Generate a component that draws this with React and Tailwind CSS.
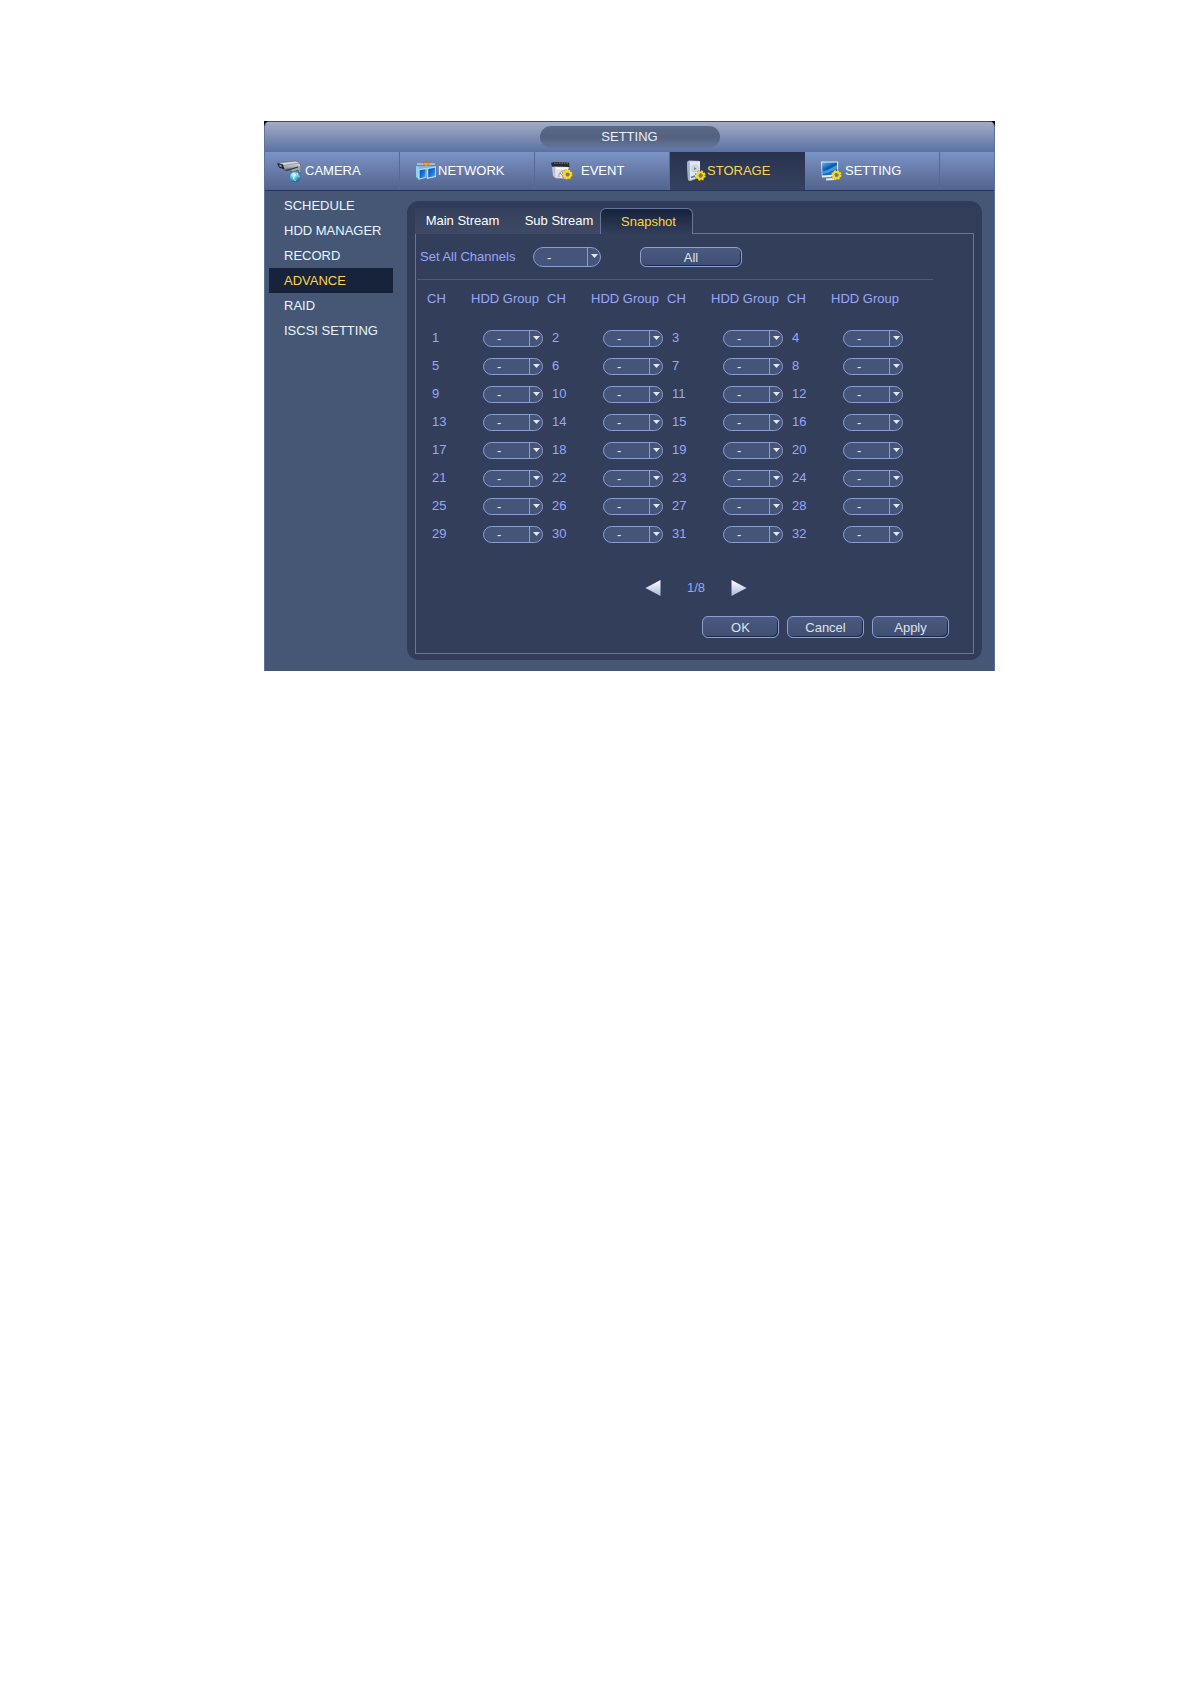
import { useState } from 'react';

const GROUPS = ['-', '1', '2', '3', '4'];
const ROWS = [0, 1, 2, 3, 4, 5, 6, 7].map(r => [1, 2, 3, 4].map(c => r * 4 + c));
const SIDE_ITEMS = ['SCHEDULE', 'HDD MANAGER', 'RECORD', 'ADVANCE', 'RAID', 'ISCSI SETTING'];

function Gear({ x, y }) {
  return (
    <g transform={`translate(${x} ${y})`}>
      <circle r="4.4" fill="none" stroke="#a87a12" strokeWidth="2.2" strokeDasharray="1.900 1.550" />
      <circle r="3.900" fill="none" stroke="#f8dc20" strokeWidth="2" strokeDasharray="1.900 1.160" />
      <circle r="3" fill="none" stroke="#f8d91e" strokeWidth="1.800" />
      <circle r="1.900" fill="#6d7a92" />
    </g>
  );
}

function CameraIcon() {
  return (
    <svg className="h-6 w-6 shrink-0" viewBox="0 0 24 24" aria-hidden="true">
      <defs>
        <linearGradient id="camBody" x1="0" y1="0" x2="0" y2="1">
          <stop offset="0" stopColor="#f2f2f4" />
          <stop offset="0.55" stopColor="#a9adb5" />
          <stop offset="1" stopColor="#4a4f5a" />
        </linearGradient>
        <radialGradient id="camGlobe" cx="0.4" cy="0.3" r="0.7">
          <stop offset="0" stopColor="#d8fbff" />
          <stop offset="0.5" stopColor="#55bfe0" />
          <stop offset="1" stopColor="#14689a" />
        </radialGradient>
      </defs>
      <path d="M20 7l4-2v9h-2l-1-3-5 2-3-1 1-2 4-1z" fill="#9ba3b3" stroke="#3c465c" strokeWidth="0.6" />
      <path d="M5 5l15-2 3 2v3l-14 4-4-2z" fill="url(#camBody)" />
      <path d="M1 4l18-2 4 2-16 2.500z" fill="#d3d5db" stroke="#5b5f6a" strokeWidth="0.5" />
      <path d="M0 4l6 1.500 1.500 5-5.500-2z" fill="#22252c" />
      <path d="M2.500 5.500l2 .7v2l-2-.8z" fill="#8f98a8" />
      <path d="M9 11.500l12-3.500" stroke="#2d323d" strokeWidth="1.200" />
      <circle cx="18" cy="18" r="5.200" fill="url(#camGlobe)" />
      <path d="M14.500 16c2-2 4-1 4 0s-2 1-2 3 2 2 2 3M20.500 14c-1 2 1 3 2 4" fill="none" stroke="#e2fbff" strokeWidth="0.9" />
    </svg>
  );
}

function NetworkIcon() {
  return (
    <svg className="h-5 w-5 shrink-0" viewBox="0 0 20 20" aria-hidden="true">
      <defs>
        <linearGradient id="netScreen" x1="0" y1="0" x2="1" y2="1">
          <stop offset="0" stopColor="#0c4fb4" />
          <stop offset="0.5" stopColor="#1671d2" />
          <stop offset="1" stopColor="#4fb0f2" />
        </linearGradient>
      </defs>
      <path d="M1 3h18" stroke="#d9c9a8" strokeWidth="1.300" />
      <path d="M7 1.500h6l-2 3.500H9z" fill="#f5a81c" stroke="#c2560e" strokeWidth="0.5" />
      <path d="M0 5h20v3H0z" fill="#7fb6e8" />
      <path d="M0 5l3 1.500v12L0 16z" fill="#8fd0f4" />
      <path d="M2.500 8.200l8-1.400v10l-8 2z" fill="#b5dcf7" />
      <path d="M3.600 9.200l6-1v7.800l-6 1.500z" fill="url(#netScreen)" />
      <path d="M11 7l9-1.500v10.500l-9 2z" fill="#b5dcf7" />
      <path d="M12.200 8l6.800-1.200v8.200l-6.800 1.500z" fill="url(#netScreen)" />
    </svg>
  );
}

function EventIcon() {
  return (
    <svg className="h-5 w-[22px] shrink-0" viewBox="0 0 22 20" aria-hidden="true">
      <path d="M3 5h15l-1 13-13-1z" fill="#dfe3e8" stroke="#8a8f99" strokeWidth="0.5" />
      <path d="M0 2l3-1 15 .5.500 4.500L1 5.500z" fill="#2b2b2d" />
      <path d="M3 2.200h14" stroke="#898b90" strokeWidth="0.8" strokeDasharray="1.500 1" />
      <path d="M1 6h2l1.500 11-2.500-2z" fill="#c4c9d1" />
      <path d="M5 7.500h12" stroke="#fff" strokeWidth="1.400" />
      <path d="M8 16a5 5 0 0 1 6-6M9 12l3 3" fill="none" stroke="#9098a8" strokeWidth="1" />
      <Gear x={16.5} y={13.5} />
    </svg>
  );
}

function StorageIcon() {
  return (
    <svg className="h-[22px] w-5 shrink-0" viewBox="0 0 20 22" aria-hidden="true">
      <path d="M1 2l2-1.500L14 1v14l-1 3-9 3-2-1z" fill="#b9c6d9" />
      <path d="M3.500 1.500L14 1.500v14L4 20z" fill="#dfe7f1" />
      <path d="M1 2l2.500-.5L4 20.500 2 20z" fill="#9fb0c8" />
      <circle cx="9" cy="8.500" r="3.500" fill="#cdd8e7" stroke="#b3c0d3" strokeWidth="0.6" />
      <path d="M8 7l2.500 1.500L8 10.500z" fill="#7587a0" />
      <path d="M5 17.500l4-1.500" stroke="#5f7189" strokeWidth="1.400" />
      <Gear x={14.5} y={15.5} />
    </svg>
  );
}

function SettingIcon() {
  return (
    <svg className="h-5 w-[22px] shrink-0" viewBox="0 0 22 20" aria-hidden="true">
      <defs>
        <linearGradient id="setScreen" x1="0" y1="0" x2="0.6" y2="1">
          <stop offset="0" stopColor="#5fb6f2" />
          <stop offset="0.5" stopColor="#0f55ad" />
          <stop offset="1" stopColor="#1a78d6" />
        </linearGradient>
      </defs>
      <path d="M1 .5h17v15l-16 1z" fill="#eef5fb" stroke="#9fb6d0" strokeWidth="0.4" />
      <path d="M2 1.500h15v12l-14.500 1z" fill="url(#setScreen)" />
      <path d="M2 10c5 0 9-3 15-6v4c-5 1-9 5-14.500 5z" fill="#63baf4" opacity="0.6" />
      <path d="M6 17.500l8-.8 1 2.300-9 .5z" fill="#e4eaf2" />
      <Gear x={16.5} y={14} />
    </svg>
  );
}

const NAV = [
  { label: 'CAMERA', Icon: CameraIcon, pad: 'pl-3 gap-1' },
  { label: 'NETWORK', Icon: NetworkIcon, pad: 'pl-4 gap-[2px]' },
  { label: 'EVENT', Icon: EventIcon, pad: 'pl-4 gap-2' },
  { label: 'STORAGE', Icon: StorageIcon, pad: 'pl-4 gap-[1px]' },
  { label: 'SETTING', Icon: SettingIcon, pad: 'pl-[15px] gap-[3px]' },
];

function GroupSelect({ label, id, big, value, onChange }) {
  return (
    <span className={`relative flex ${big ? 'h-5 w-[68px]' : 'h-[17px] w-[60px]'}`}>
      <select id={id} aria-label={label} value={value} onChange={e => onChange(e.target.value)}
        className="h-full w-full appearance-none rounded-full border border-[#8b9cd0] bg-[#45557a] pl-[13px] text-[13px] leading-none text-[#e4eaf8] outline-none">
        {GROUPS.map(g => <option key={g}>{g}</option>)}
      </select>
      <span className="pointer-events-none absolute inset-y-0 right-0 flex w-[14px] justify-center border-l border-[#8b9cd0] pr-[1px]">
        <svg className={big ? 'mt-[7px] h-1 w-[7px]' : 'mt-[6px] h-1 w-[7px]'} viewBox="0 0 7 4" aria-hidden="true">
          <path d="M0 0h7L3.500 4z" fill="#dfe7f8" />
        </svg>
      </span>
    </span>
  );
}

function Button({ children, className, onClick }) {
  return (
    <button type="button" onClick={onClick}
      className={`flex items-center justify-center rounded-md border border-[#8f9fd6] bg-gradient-to-b from-[#4a5a80] to-[#3f4e70] text-[13px] leading-none text-[#dde3ee] shadow-[inset_-1px_-1px_0_#1c2850] ${className}`}>
      {children}
    </button>
  );
}

export default function App() {
  const [groups, setGroups] = useState({});
  const [all, setAll] = useState('-');
  const [page, setPage] = useState(1);

  const setGroup = (ch, v) => setGroups(g => ({ ...g, [ch]: v }));

  function applyAll() {
    setGroups(Object.fromEntries(ROWS.flat().map(ch => [ch, all])));
  }

  return (
    <main className="min-h-screen bg-white pt-[121px] pr-[196px] pl-[264px] font-['Liberation_Sans',Arial,sans-serif] text-[13px] leading-4">
      <div className="bg-black">
        <div className="overflow-hidden rounded-t-md border-x border-[#5d7199] bg-[#465675]">

          {/* Title bar */}
          <header className="flex h-[31px] items-center justify-center border-t border-[#3d4c6c] bg-gradient-to-b from-[#a3acc5] to-[#5b71a3]">
            <h1 className="flex h-[22px] w-[180px] items-center justify-center rounded-full bg-gradient-to-b from-[#5b6988] via-[#53617f] to-[#64759b] text-[#e6f0ff]">
              SETTING
            </h1>
          </header>

          {/* Main menu */}
          <nav className="flex h-[39px] border-b border-[#24345b] bg-gradient-to-b from-[#7b93c6] to-[#52648d]">
            {NAV.map(({ label, Icon, pad }) => (
              <a key={label} href="#" aria-current={label === 'STORAGE' ? 'page' : undefined}
                className={`flex w-[135px] items-center ${pad} ${label === 'STORAGE'
                  ? 'bg-gradient-to-b from-[#27324e] to-[#35425f] text-[#ffd44a]'
                  : 'border-r border-[#566a96] text-white'}`}>
                <Icon />
                {label}
              </a>
            ))}
          </nav>

          <div className="flex pb-[11px]">
            {/* Sidebar */}
            <aside className="w-[142px] shrink-0 pt-[2px]">
              <ul className="ml-1 w-[124px]">
                {SIDE_ITEMS.map(item => (
                  <li key={item}>
                    <a href="#" className={`flex h-[25px] items-center pl-[15px] ${item === 'ADVANCE' ? 'bg-[#17233a] text-[#ffd44a]' : 'text-[#e8f6ff]'}`}>
                      {item}
                    </a>
                  </li>
                ))}
              </ul>
            </aside>

            {/* Panel */}
            <section className="mt-[10px] mr-3 flex-1 rounded-xl bg-[#313d58] px-2 pt-[7px] pb-[6px]">
              <div className="flex h-[26px] border-b border-[#66779a] bg-[#333f5a]" role="tablist">
                <button type="button" role="tab" className="-mb-px w-[95px] border-b border-[#3d4965] bg-gradient-to-b from-[#35415c] to-[#3d4965] text-white">
                  Main Stream
                </button>
                <button type="button" role="tab" className="-mb-px w-[90px] border-b border-[#3d4965] bg-gradient-to-b from-[#35415c] to-[#3d4965] pl-2 text-white">
                  Sub Stream
                </button>
                <button type="button" role="tab" aria-selected="true"
                  className="-mb-px w-[93px] rounded-t-md border border-b-0 border-[#66779a] bg-gradient-to-b from-[#17213c] to-[#333f5a] pl-1 text-[#ffd633]">
                  Snapshot
                </button>
              </div>

              <div className="border-x border-b border-[#66779a] bg-[#333f5a] pt-[13px] pb-[15px] text-[#97a7fb]">
                <div className="flex items-center pl-1">
                  <label htmlFor="all-channels" className="w-[113px]">Set All Channels</label>
                  <GroupSelect id="all-channels" big value={all} onChange={setAll} />
                  <Button className="ml-[39px] h-5 w-[102px]" onClick={applyAll}>All</Button>
                </div>

                <hr className="mt-3 mr-10 ml-px border-[#4c5a78]" />

                <table className="mt-[9px] ml-[11px] w-[480px] table-fixed border-collapse text-left">
                  <thead>
                    <tr className="h-5">
                      {ROWS[0].flatMap(c => [
                        <th key={`c${c}`} className="w-[44px] p-0 font-normal">CH</th>,
                        <th key={`g${c}`} className="w-[76px] p-0 font-normal whitespace-nowrap">HDD Group</th>,
                      ])}
                    </tr>
                    <tr className="h-[15px]" aria-hidden="true" />
                  </thead>
                  <tbody>
                    {ROWS.map(row => (
                      <tr key={row[0]} className="h-7">
                        {row.flatMap(ch => [
                          <td key={`c${ch}`} className="p-0 pl-[5px]">{ch}</td>,
                          <td key={`g${ch}`} className="p-0 pl-3">
                            <GroupSelect label={`HDD group of channel ${ch}`} value={groups[ch] || '-'} onChange={v => setGroup(ch, v)} />
                          </td>,
                        ])}
                      </tr>
                    ))}
                  </tbody>
                </table>

                {/* Pager */}
                <div className="mt-8 flex items-center justify-center pl-[3px]">
                  <button type="button" aria-label="Previous page" onClick={() => setPage(p => Math.max(1, p - 1))}>
                    <svg className="h-4 w-4" viewBox="0 0 16 16" aria-hidden="true">
                      <defs>
                        <linearGradient id="arrow" x1="0" y1="0" x2="0" y2="1">
                          <stop offset="0" stopColor="#fff" />
                          <stop offset="1" stopColor="#a9b8dc" />
                        </linearGradient>
                      </defs>
                      <path d="M15.500 0v16L.5 8z" fill="url(#arrow)" />
                    </svg>
                  </button>
                  <span className="w-[70px] text-center">{page}/8</span>
                  <button type="button" aria-label="Next page" onClick={() => setPage(p => Math.min(8, p + 1))}>
                    <svg className="h-4 w-4" viewBox="0 0 16 16" aria-hidden="true">
                      <path d="M.5 0v16l15-8z" fill="url(#arrow)" />
                    </svg>
                  </button>
                </div>

                <div className="mt-5 mr-6 flex justify-end gap-2">
                  <Button className="h-[22px] w-[77px]">OK</Button>
                  <Button className="h-[22px] w-[77px]">Cancel</Button>
                  <Button className="h-[22px] w-[77px]">Apply</Button>
                </div>
              </div>
            </section>
          </div>
        </div>
      </div>
    </main>
  );
}
